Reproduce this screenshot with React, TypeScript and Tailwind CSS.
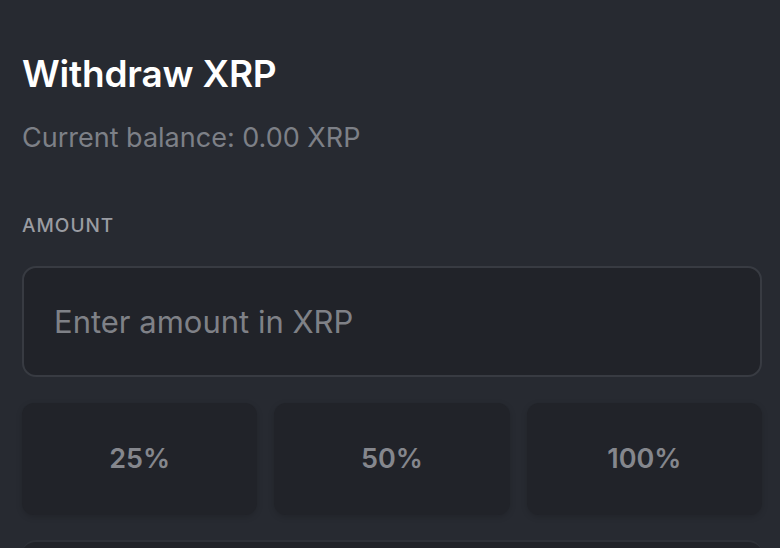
export default function App() {
  return (
    <div
      className="w-[780px] h-[548px] overflow-hidden bg-[#272a31] pl-[22px] pr-[18px] pt-[50px]"
      style={{ fontFamily: 'Inter, "Noto Sans", sans-serif' }}
    >
      <h1 className="text-[37px] leading-[48px] font-semibold text-white tracking-[-0.2px]">Withdraw XRP</h1>
      <p className="mt-[24px] text-[27px] leading-[32px] text-[#7d8087]">Current balance: 0.00 XRP</p>

      <div className="mt-[60px] text-[19px] leading-[24px] tracking-[1px] text-[#9a9ca2] font-medium">AMOUNT</div>

      <input
        type="text"
        placeholder="Enter amount in XRP"
        className="mt-[28px] block w-full h-[111px] rounded-[14px] border-2 border-[#383b42] bg-[#212329] px-[30px] text-[31px] text-white placeholder:text-[#7f8187] outline-none"
      />

      <div className="mt-[26px] grid grid-cols-3 gap-[17px]">
        {['25%', '50%', '100%'].map((p) => (
          <button
            key={p}
            className="h-[112px] rounded-[12px] bg-[#212329] shadow-[0_2px_6px_rgba(0,0,0,0.15)] text-[27px] font-semibold text-[#85878d]"
          >
            {p}
          </button>
        ))}
      </div>

      <div className="mt-[25px] h-[100px] rounded-[14px] bg-[#212329] border-t-2 border-[#2e3138]" />
    </div>
  )
}
